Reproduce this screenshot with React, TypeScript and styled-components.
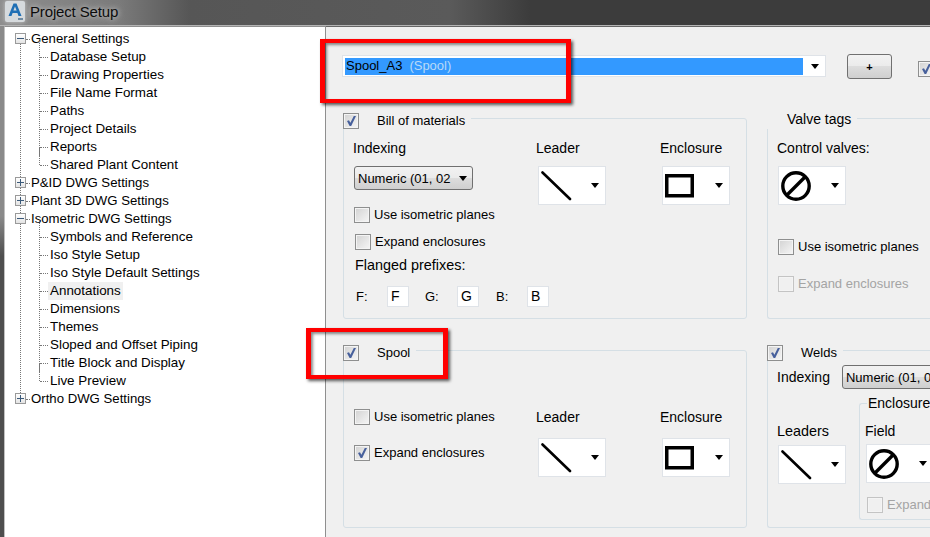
import React from "react";
import styled, { createGlobalStyle } from "styled-components";

const Global = createGlobalStyle`
  html, body { margin: 0; padding: 0; background: #f0f0f0; }
  body { font-family: "Liberation Sans", Arial, sans-serif; font-size: 13px; color: #000; }
  * { box-sizing: border-box; }
`;

const Window = styled.div`
  position: relative;
  width: 930px;
  height: 537px;
  overflow: hidden;
  display: flex;
  flex-direction: column;
  background: #4a4a4a;
`;

const TitleBar = styled.div`
  height: 26px;
  flex: none;
  display: flex;
  align-items: center;
  padding: 0 0 3px 5px;
  gap: 5px;
  border-bottom: 1px solid #b4b4b4;
  background: linear-gradient(90deg, #8e8e8e 0, #7a7a7a 120px, #565656 190px, #5a5a5a 450px, #3c3c3c 530px, #3c3c3c 100%);
`;

const TitleText = styled.span`
  font-size: 15px;
  letter-spacing: -0.15px;
  color: #0c0c0c;
  text-shadow: 0 0 5px #c4c4c4, 0 0 7px #b4b4b4;
`;

const Body = styled.div`
  flex: 1;
  min-height: 0;
  display: flex;
  padding-left: 4px;
  background: linear-gradient(180deg, #8a8a8a 0, #8a8a8a 190px, #4e4e4e 230px, #4e4e4e 100%);
`;

const TreePanel = styled.div`
  width: 322px;
  flex: none;
  background: #fff;
  border: 1px solid #8f8f8f;
  border-left-color: #c0c0c0;
  border-bottom: none;
  padding: 3px 0 0 10px;
`;

const Row = styled.div<{ $depth: number }>`
  position: relative;
  height: 18px;
  display: flex;
  align-items: center;
  padding-left: ${(p) => (p.$depth === 0 ? 14 : 33)}px;
  font-size: ${(p) => (p.$depth === 0 ? 13.2 : 13.4)}px;
  white-space: nowrap;
`;

const RowLabel = styled.span<{ $selected?: boolean }>`
  padding: 0 2px;
  line-height: 18px;
  background: ${(p) => (p.$selected ? "#f0f0f0" : "transparent")};
`;

const Expander = styled.span`
  position: absolute;
  left: 0;
  top: 3px;
  width: 11px;
  height: 11px;
  background: linear-gradient(180deg, #fff, #e4e4e4);
  border: 1px solid #9a9a9a;
  display: flex;
  align-items: center;
  justify-content: center;
  z-index: 1;
`;

const Dots = styled.span<{ $left: number; $width: number }>`
  position: absolute;
  left: ${(p) => p.$left}px;
  top: 9px;
  width: ${(p) => p.$width}px;
  border-top: 1px dotted #777;
`;

const VDots = styled.span<{ $left: number; $top: number; $height: number }>`
  position: absolute;
  left: ${(p) => p.$left}px;
  top: ${(p) => p.$top}px;
  height: ${(p) => p.$height}px;
  border-left: 1px dotted #777;
`;

const Content = styled.div`
  flex: 1;
  min-width: 0;
  background: #f0f0f0;
  border-top: 1px solid #666;
  padding: 27px 0 0 17px;
  overflow: hidden;
`;

const TopRow = styled.div`
  display: flex;
  align-items: flex-start;
  width: 640px;
  height: 25px;
  margin-left: -1px;
`;

const MainCombo = styled.div`
  width: 484px;
  height: 22px;
  margin-top: 1px;
  background: #fff;
  border: 1px solid #dfe3e8;
  padding: 2px;
  display: flex;
  align-items: center;
`;

const Selection = styled.div`
  width: 458px;
  height: 17px;
  background: #3399ff;
  line-height: 16px;
  padding-left: 1px;
`;

const Muted = styled.span`
  color: #b9d9f7;
  margin-left: 7px;
`;

const Arrow = styled.span`
  width: 0;
  height: 0;
  border-left: 4.5px solid transparent;
  border-right: 4.5px solid transparent;
  border-top: 5px solid #000;
  flex: none;
`;

const ComboArrowSlot = styled.span`
  flex: 1;
  display: flex;
  justify-content: center;
  padding-left: 4px;
`;

const PlusButton = styled.div`
  width: 45px;
  height: 25px;
  margin-left: 21px;
  flex: none;
  border: 1px solid #707070;
  border-radius: 3px;
  background: linear-gradient(180deg, #f2f2f2 0, #ebebeb 48%, #dddddd 50%, #cfcfcf 100%);
  display: flex;
  align-items: center;
  justify-content: center;
  font-size: 11px;
  font-weight: bold;
`;

const TopCheck = styled.div`
  margin: 7px 0 0 26px;
  flex: none;
`;

const Grid = styled.div`
  display: grid;
  grid-template-columns: 404px 200px;
  column-gap: 20px;
  row-gap: 31px;
  width: 640px;
  margin-top: 39px;
`;

const Group = styled.div<{ $height: number; $open?: boolean }>`
  height: ${(p) => p.$height}px;
  border: 1px solid #d5dfe5;
  border-radius: 3px;
  ${(p) => (p.$open ? "border-right: none; border-radius: 3px 0 0 3px;" : "")}
  display: flex;
  flex-direction: column;
`;

const Legend = styled.div<{ $pad: number }>`
  display: flex;
  align-items: center;
  height: 16px;
  margin: -6px 0 0 -1px;
  width: fit-content;
  background: #f0f0f0;
  padding-right: 6px;
  flex: none;
  padding-left: ${(p) => p.$pad}px;
`;

const LegendLabel = styled.span`
  margin: -2px 0 0 18px;
`;

const LegendTitle = styled.span`
  font-size: 14px;
  margin-top: -4px;
`;

const GroupBody = styled.div`
  display: flex;
  padding: 10px 0 0 9px;
`;

const Stack = styled.div<{ $width: number }>`
  width: ${(p) => p.$width}px;
  flex: none;
  display: flex;
  flex-direction: column;
`;

const Label = styled.div<{ $size?: number }>`
  height: 18px;
  line-height: 18px;
  font-size: ${(p) => p.$size ?? 14}px;
  white-space: nowrap;
`;

const Spaced = styled.div<{ $top: number; $left?: number }>`
  margin-top: ${(p) => p.$top}px;
  margin-left: ${(p) => p.$left ?? 0}px;
  flex: none;
`;

const Select = styled.div`
  width: 119px;
  height: 24px;
  margin-top: 9px;
  margin-left: 1px;
  flex: none;
  border: 1px solid #707070;
  border-radius: 3px;
  background: linear-gradient(180deg, #f2f2f2 0, #ebebeb 48%, #dddddd 50%, #cfcfcf 100%);
  display: flex;
  align-items: center;
  justify-content: space-between;
  padding: 0 5px 0 3px;
  white-space: nowrap;
  overflow: hidden;
`;

const WeldSelect = styled(Select)`
  margin-top: 0;
  margin-left: 12px;
`;

const IconBox = styled.div`
  width: 68px;
  height: 39px;
  background: #fff;
  border: 1px solid #dfe3e8;
  display: flex;
  align-items: center;
  justify-content: space-between;
  padding: 0 6px 0 2px;
`;

const CheckRow = styled.div<{ $disabled?: boolean }>`
  display: flex;
  align-items: center;
  gap: 4px;
  height: 16px;
  white-space: nowrap;
  color: ${(p) => (p.$disabled ? "#a4a4a4" : "#000")};
`;

const CheckText = styled.span`
  margin-top: -2px;
`;

const Box = styled.span<{ $disabled?: boolean }>`
  width: 16px;
  height: 16px;
  flex: none;
  display: inline-flex;
  align-items: center;
  justify-content: center;
  border: 1px solid ${(p) => (p.$disabled ? "#c4c4c4" : "#8e8f8f")};
  background: ${(p) =>
    p.$disabled
      ? "#f0f0f0"
      : "linear-gradient(135deg, #d2d2d2 0, #e8e8e8 60%, #f6f6f6 100%)"};
  box-shadow: inset 0 0 0 1px #f4f4f4;
`;

const PrefixRow = styled.div`
  display: flex;
  align-items: center;
  margin-top: 12px;
  margin-left: 3px;
  height: 21px;
`;

const PrefixLabel = styled.span<{ $width: number }>`
  width: ${(p) => p.$width}px;
  flex: none;
`;

const PrefixInput = styled.span<{ $gap: number }>`
  width: 22px;
  height: 21px;
  flex: none;
  margin-right: ${(p) => p.$gap}px;
  background: #fff;
  border: 1px solid #dfe3e8;
  padding-left: 3px;
  font-size: 14px;
  line-height: 19px;
`;

const ColumnRow = styled.div`
  display: flex;
`;

const InnerGroup = styled.div`
  width: 80px;
  height: 117px;
  margin-left: 13px;
  margin-top: 14px;
  flex: none;
  border: 1px solid #d5dfe5;
  border-right: none;
  border-radius: 3px 0 0 3px;
  padding-left: 5px;
  display: flex;
  flex-direction: column;
  white-space: nowrap;
`;

const InnerLegend = styled.div`
  height: 16px;
  margin: -9px 0 0 2px;
  padding: 0 1px;
  font-size: 14px;
  line-height: 16px;
  background: #f0f0f0;
  width: fit-content;
`;

const Highlight = styled.div<{ $x: number; $y: number; $w: number; $h: number }>`
  position: absolute;
  left: ${(p) => p.$x}px;
  top: ${(p) => p.$y}px;
  width: ${(p) => p.$w}px;
  height: ${(p) => p.$h}px;
  border: 4px solid #f00;
  border-left-width: 5px;
  border-right-width: 5px;
  box-shadow: 2px 2px 3px rgba(0, 0, 0, 0.65), inset 2px 2px 3px rgba(0, 0, 0, 0.45);
  pointer-events: none;
`;

const Check = ({ on, disabled }: { on?: boolean; disabled?: boolean }) => (
  <Box $disabled={disabled}>
    {on && (
      <svg width="12" height="12" viewBox="0 0 12 12">
        <path d="M2 6 L4.6 11 L6.2 11 L11 1 L8.8 1 L5.4 7.8 L4 5.2 Z" fill="#47609c" />
      </svg>
    )}
  </Box>
);

const LabeledCheck = ({ on, disabled, children }: { on?: boolean; disabled?: boolean; children: React.ReactNode }) => (
  <CheckRow $disabled={disabled}>
    <Check on={on} disabled={disabled} />
    <CheckText>{children}</CheckText>
  </CheckRow>
);

const LeaderIcon = () => (
  <svg width="32" height="34" viewBox="0 0 32 34">
    <line x1="1.5" y1="3.5" x2="29" y2="30" stroke="#000" strokeWidth="2.6" strokeLinecap="round" />
  </svg>
);

const EnclosureIcon = () => (
  <svg width="32" height="24" viewBox="0 0 32 24">
    <rect x="1.75" y="1.75" width="25.5" height="20" fill="#fff" stroke="#000" strokeWidth="3.5" />
  </svg>
);

const ValveIcon = () => (
  <svg width="32" height="32" viewBox="0 0 32 32">
    <circle cx="15" cy="16" r="13.2" fill="none" stroke="#000" strokeWidth="3.4" />
    <line x1="6" y1="25" x2="24" y2="7" stroke="#000" strokeWidth="3.4" />
  </svg>
);

const LogoGlow = styled.div`
  width: 20px;
  height: 21px;
  flex: none;
  background: #d6dadd;
  border-radius: 2px;
  box-shadow: 0 0 4px #c8c8c8;
  display: flex;
  align-items: center;
  justify-content: center;
`;

const Logo = () => (
  <LogoGlow>
    <svg width="18" height="19" viewBox="0 0 18 19">
      <path
        d="M2.5 14 L7.5 1.5 H10.5 L15.5 14 H12.5 L11.4 11 H6.6 L5.5 14 Z M7.4 8.6 H10.6 L9 4.4 Z"
        fill="#1f6fb5"
        fillRule="evenodd"
      />
      <rect x="12" y="16" width="5" height="2" fill="#6f8ba3" />
    </svg>
  </LogoGlow>
);

type TreeItem = { label: string; children?: string[]; open?: boolean };

const tree: TreeItem[] = [
  {
    label: "General Settings",
    open: true,
    children: ["Database Setup", "Drawing Properties", "File Name Format", "Paths", "Project Details", "Reports", "Shared Plant Content"],
  },
  { label: "P&ID DWG Settings" },
  { label: "Plant 3D DWG Settings" },
  {
    label: "Isometric DWG Settings",
    open: true,
    children: ["Symbols and Reference", "Iso Style Setup", "Iso Style Default Settings", "Annotations", "Dimensions", "Themes", "Sloped and Offset Piping", "Title Block and Display", "Live Preview"],
  },
  { label: "Ortho DWG Settings" },
];

const ExpanderIcon = ({ open }: { open?: boolean }) => (
  <Expander>
    <svg width="9" height="9" viewBox="0 0 9 9">
      <rect x="1" y="4" width="7" height="1" fill="#3b5a7a" />
      {!open && <rect x="4" y="1" width="1" height="7" fill="#3b5a7a" />}
    </svg>
  </Expander>
);

const Tree = () => (
  <TreePanel>
    {tree.map((item, i) => (
      <React.Fragment key={item.label}>
        <Row $depth={0}>
          <ExpanderIcon open={item.open} />
          {i < tree.length - 1 && (
            <VDots $left={5} $top={14} $height={18 * (1 + (item.children?.length ?? 0)) - 9} />
          )}
          <Dots $left={11} $width={4} />
          <RowLabel>{item.label}</RowLabel>
        </Row>
        {item.children?.map((child, j) => (
          <Row $depth={1} key={child}>
            <VDots $left={24} $top={-9} $height={j === item.children!.length - 1 ? 18 : 27} />
            <Dots $left={25} $width={8} />
            <RowLabel $selected={child === "Annotations"}>{child}</RowLabel>
          </Row>
        ))}
      </React.Fragment>
    ))}
  </TreePanel>
);

export default function App() {
  return (
    <Window>
      <Global />
      <TitleBar>
        <Logo />
        <TitleText>Project Setup</TitleText>
      </TitleBar>
      <Body>
        <Tree />
        <Content>
          <TopRow>
            <MainCombo>
              <Selection>
                Spool_A3<Muted>(Spool)</Muted>
              </Selection>
              <ComboArrowSlot>
                <Arrow />
              </ComboArrowSlot>
            </MainCombo>
            <PlusButton>+</PlusButton>
            <TopCheck>
              <Check on />
            </TopCheck>
          </TopRow>
          <Grid>
            <Group $height={201}>
              <Legend $pad={0}>
                <Check on />
                <LegendLabel>Bill of materials</LegendLabel>
              </Legend>
              <GroupBody>
                <Stack $width={183}>
                  <Label>Indexing</Label>
                  <Select>
                    Numeric (01, 02
                    <Arrow />
                  </Select>
                  <Spaced $top={17} $left={1}>
                    <LabeledCheck>Use isometric planes</LabeledCheck>
                  </Spaced>
                  <Spaced $top={11} $left={2}>
                    <LabeledCheck>Expand enclosures</LabeledCheck>
                  </Spaced>
                  <Spaced $top={6} $left={2}>
                    <Label $size={14.4}>Flanged prefixes:</Label>
                  </Spaced>
                  <PrefixRow>
                    <PrefixLabel $width={31}>F:</PrefixLabel>
                    <PrefixInput $gap={16}>F</PrefixInput>
                    <PrefixLabel $width={32}>G:</PrefixLabel>
                    <PrefixInput $gap={17}>G</PrefixInput>
                    <PrefixLabel $width={31}>B:</PrefixLabel>
                    <PrefixInput $gap={0}>B</PrefixInput>
                  </PrefixRow>
                </Stack>
                <Stack $width={124}>
                  <Label>Leader</Label>
                  <Spaced $top={9} $left={2}>
                    <IconBox>
                      <LeaderIcon />
                      <Arrow />
                    </IconBox>
                  </Spaced>
                </Stack>
                <Stack $width={80}>
                  <Label>Enclosure</Label>
                  <Spaced $top={9} $left={2}>
                    <IconBox>
                      <EnclosureIcon />
                      <Arrow />
                    </IconBox>
                  </Spaced>
                </Stack>
              </GroupBody>
            </Group>

            <Group $height={201} $open>
              <Legend $pad={20}>
                <LegendTitle>Valve tags</LegendTitle>
              </Legend>
              <GroupBody>
                <Stack $width={170}>
                  <Label>Control valves:</Label>
                  <Spaced $top={9} $left={1}>
                    <IconBox>
                      <ValveIcon />
                      <Arrow />
                    </IconBox>
                  </Spaced>
                  <Spaced $top={34} $left={1}>
                    <LabeledCheck>Use isometric planes</LabeledCheck>
                  </Spaced>
                  <Spaced $top={21} $left={1}>
                    <LabeledCheck disabled>Expand enclosures</LabeledCheck>
                  </Spaced>
                </Stack>
              </GroupBody>
            </Group>

            <Group $height={178}>
              <Legend $pad={0}>
                <Check on />
                <LegendLabel>Spool</LegendLabel>
              </Legend>
              <GroupBody>
                <Stack $width={183}>
                  <Spaced $top={38} $left={1}>
                    <LabeledCheck>Use isometric planes</LabeledCheck>
                  </Spaced>
                  <Spaced $top={20} $left={1}>
                    <LabeledCheck on>Expand enclosures</LabeledCheck>
                  </Spaced>
                </Stack>
                <Stack $width={124}>
                  <Spaced $top={37}>
                    <Label>Leader</Label>
                  </Spaced>
                  <Spaced $top={12} $left={2}>
                    <IconBox>
                      <LeaderIcon />
                      <Arrow />
                    </IconBox>
                  </Spaced>
                </Stack>
                <Stack $width={80}>
                  <Spaced $top={37}>
                    <Label>Enclosure</Label>
                  </Spaced>
                  <Spaced $top={12} $left={2}>
                    <IconBox>
                      <EnclosureIcon />
                      <Arrow />
                    </IconBox>
                  </Spaced>
                </Stack>
              </GroupBody>
            </Group>

            <Group $height={178} $open>
              <Legend $pad={0}>
                <Check on />
                <LegendLabel>Welds</LegendLabel>
              </Legend>
              <Stack $width={190}>
                <Spaced $top={4} $left={9}>
                  <ColumnRow>
                    <Spaced $top={3}>
                      <Label>Indexing</Label>
                    </Spaced>
                    <WeldSelect>Numeric (01, 02</WeldSelect>
                  </ColumnRow>
                </Spaced>
                <ColumnRow>
                  <Spaced $top={33} $left={9}>
                    <Label $size={14.4}>Leaders</Label>
                    <Spaced $top={5} $left={1}>
                      <IconBox>
                        <LeaderIcon />
                        <Arrow />
                      </IconBox>
                    </Spaced>
                  </Spaced>
                  <InnerGroup>
                    <InnerLegend>Enclosures</InnerLegend>
                    <Spaced $top={11}>
                      <Label>Field</Label>
                    </Spaced>
                    <Spaced $top={4} $left={1}>
                      <IconBox>
                        <ValveIcon />
                        <Arrow />
                      </IconBox>
                    </Spaced>
                    <Spaced $top={14} $left={2}>
                      <LabeledCheck disabled>Expand enclosures</LabeledCheck>
                    </Spaced>
                  </InnerGroup>
                </ColumnRow>
              </Stack>
            </Group>
          </Grid>
        </Content>
      </Body>
      <Highlight $x={320} $y={39} $w={251} $h={64} />
      <Highlight $x={306} $y={328} $w={142} $h={51} />
    </Window>
  );
}
